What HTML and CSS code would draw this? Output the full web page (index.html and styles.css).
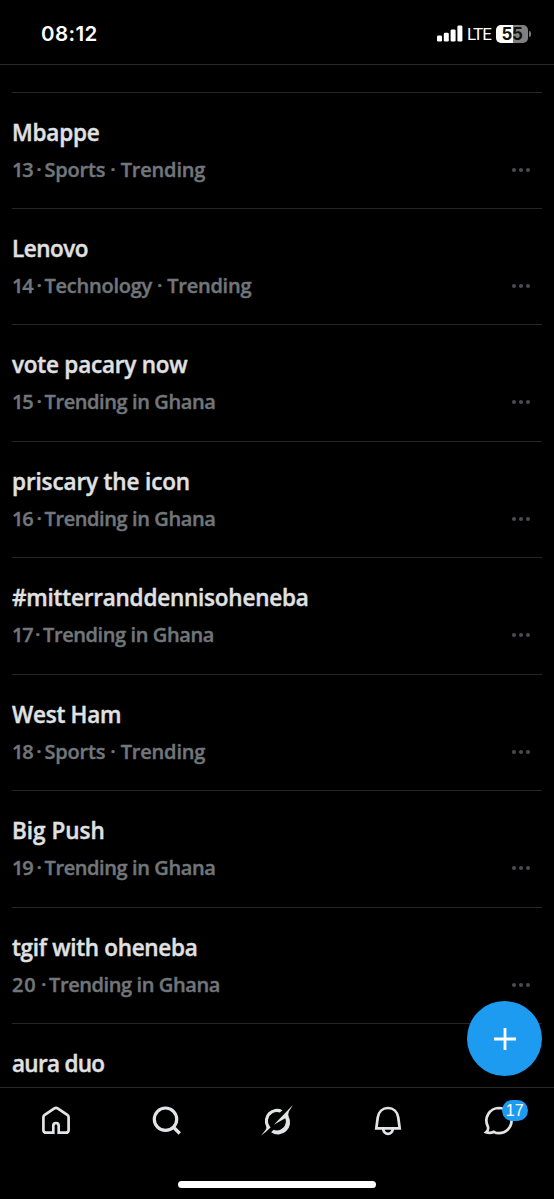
FILE: index.html
```html
<!DOCTYPE html>
<html lang="en">
<head>
<meta charset="utf-8">
<title>Trending</title>
<link rel="stylesheet" href="styles.css">
</head>
<body>
<div class="screen">
  <header class="status">
    <span class="time">08:12</span>
    <div class="indicators">
      <svg class="signal" width="26" height="17" viewBox="0 0 26 17" fill="#fff"><rect x="0" y="10.5" width="5" height="6" rx="1.3"/><rect x="6.8" y="7.7" width="5" height="8.8" rx="1.3"/><rect x="13.6" y="4.4" width="5" height="12.1" rx="1.3"/><rect x="20.4" y="0.5" width="5" height="16" rx="1.3"/></svg>
      <span class="network">LTE</span>
      <span class="battery">55</span>
      <span class="battery-tip"></span>
    </div>
  </header>
  <main class="trends">
    <article class="trend"><div><h2 class="t1">Mbappe</h2><p class="sports"><span class="rank">13</span><i>·</i>Sports · Trending</p></div><svg class="more" width="20" height="6" viewBox="0 0 20 6"><circle cx="3" cy="3" r="2"/><circle cx="10" cy="3" r="2"/><circle cx="17" cy="3" r="2"/></svg></article>
    <article class="trend"><div><h2 class="t2">Lenovo</h2><p class="tech"><span class="rank">14</span><i>·</i>Technology · Trending</p></div><svg class="more" width="20" height="6" viewBox="0 0 20 6"><circle cx="3" cy="3" r="2"/><circle cx="10" cy="3" r="2"/><circle cx="17" cy="3" r="2"/></svg></article>
    <article class="trend"><div><h2 class="t3">vote pacary now</h2><p class="place"><span class="rank">15</span><i>·</i>Trending in Ghana</p></div><svg class="more" width="20" height="6" viewBox="0 0 20 6"><circle cx="3" cy="3" r="2"/><circle cx="10" cy="3" r="2"/><circle cx="17" cy="3" r="2"/></svg></article>
    <article class="trend"><div><h2 class="t4">priscary the icon</h2><p class="place"><span class="rank">16</span><i>·</i>Trending in Ghana</p></div><svg class="more" width="20" height="6" viewBox="0 0 20 6"><circle cx="3" cy="3" r="2"/><circle cx="10" cy="3" r="2"/><circle cx="17" cy="3" r="2"/></svg></article>
    <article class="trend"><div><h2 class="t5">#mitterranddennisoheneba</h2><p class="place"><span class="rank narrow">17</span><i>·</i>Trending in Ghana</p></div><svg class="more" width="20" height="6" viewBox="0 0 20 6"><circle cx="3" cy="3" r="2"/><circle cx="10" cy="3" r="2"/><circle cx="17" cy="3" r="2"/></svg></article>
    <article class="trend"><div><h2 class="t6">West Ham</h2><p class="sports"><span class="rank">18</span><i>·</i>Sports · Trending</p></div><svg class="more" width="20" height="6" viewBox="0 0 20 6"><circle cx="3" cy="3" r="2"/><circle cx="10" cy="3" r="2"/><circle cx="17" cy="3" r="2"/></svg></article>
    <article class="trend"><div><h2 class="t7">Big Push</h2><p class="place"><span class="rank">19</span><i>·</i>Trending in Ghana</p></div><svg class="more" width="20" height="6" viewBox="0 0 20 6"><circle cx="3" cy="3" r="2"/><circle cx="10" cy="3" r="2"/><circle cx="17" cy="3" r="2"/></svg></article>
    <article class="trend"><div><h2 class="t8">tgif with oheneba</h2><p class="place"><span class="rank wide">20</span><i>·</i>Trending in Ghana</p></div><svg class="more" width="20" height="6" viewBox="0 0 20 6"><circle cx="3" cy="3" r="2"/><circle cx="10" cy="3" r="2"/><circle cx="17" cy="3" r="2"/></svg></article>
    <article class="trend last"><div><h2 class="t9">aura duo</h2></div></article>
  </main>
  <button class="compose" aria-label="Compose"><svg width="24" height="24" viewBox="0 0 24 24" stroke="#fff" stroke-width="2.8"><path d="M12 1v22M1 12h22"/></svg></button>
  <nav class="tabs">
    <a><svg width="32" height="32" viewBox="0 0 32 32"><path d="M13.3 27.7H6.2Q3.4 27.7 3.4 24.9V12.3Q3.4 10.8 4.7 9.9L14 3.6Q16 2.2 18 3.6L27.3 9.9Q28.6 10.8 28.6 12.3V24.9Q28.6 27.7 25.8 27.7H18.7V21Q18.7 18 16 18T13.3 21Z"/></svg></a>
    <a><svg width="32" height="32" viewBox="0 0 32 32"><circle cx="14.5" cy="14.2" r="11.2" stroke-width="3.2"/><path d="M22.3 22L28.8 28.5" stroke-width="3.3"/></svg></a>
    <a><svg class="solid" width="34" height="34" viewBox="0 0 34 34"><path d="M22.5 5.2A12.1 12.1 0 0 0 6.1 21.3Q6.9 23.2 5.5 25L1 30.6Q5.5 27.4 10.6 22.4Q7.5 18.6 8.1 14.4A9.1 9.1 0 0 1 19.8 7.5Z"/><path d="M13.8 19.8L25.2 8Q29 4 33 .1L29 6.2Q27.8 8.7 28.6 11.5A12.1 12.1 0 0 1 11.1 27.3L13.6 24.8A9.1 9.1 0 0 0 25.3 13.2Z"/></svg></a>
    <a><svg width="32" height="32" viewBox="0 0 32 32"><path d="M4.3 23.4H27.7L26.3 12.7C25.5 6.8 21.4 3 16 3S6.5 6.8 5.7 12.7ZM11 23.8Q12 28.8 16 28.8T21 23.8"/></svg></a>
    <a class="messages"><svg width="32" height="32" viewBox="0 0 32 32"><path d="M16 3A12.6 12.6 0 0 1 16 28.2Q13 28.2 10.8 26.8Q7 28.8 3.1 27.3Q6 24.8 4.8 21.3A12.6 12.6 0 0 1 16 3Z"/></svg><span class="badge">17</span></a>
  </nav>
  <footer class="home"><span></span></footer>
</div>
</body>
</html>
```
FILE: styles.css
```css
* { box-sizing: border-box; }
body { margin: 0; background: #000; }
.screen { position: relative; width: 554px; height: 1199px; display: flex; flex-direction: column; overflow: hidden; background: #000; color: #e0e1e2; font-family: "Open Sans", "Noto Sans", sans-serif; }
.status { height: 65px; flex: none; display: flex; justify-content: space-between; align-items: flex-start; padding: 21px 23px 0 41px; border-bottom: 1px solid #28292b; color: #fff; font-family: Inter, sans-serif; }
.time { font-size: 20.5px; font-weight: 600; line-height: 26px; letter-spacing: 0.4px; }
.indicators { display: flex; align-items: center; height: 26px; }
.signal { margin-top: -2px; }
.network { margin-left: 4px; width: 25px; font-family: Roboto, sans-serif; font-size: 17.5px; line-height: 26px; letter-spacing: -1.2px; }
.network { font-size: 17px; letter-spacing: -0.9px; }
.battery { width: 32px; height: 18px; margin: -1px 0 0 4px; border-radius: 5px; background: linear-gradient(90deg, #fff 54%, #808080 54%); color: #111; font-size: 17px; font-weight: 700; line-height: 18px; text-align: center; letter-spacing: -0.4px; }
.battery-tip { width: 2px; height: 6px; margin-left: 1px; border-radius: 0 2px 2px 0; background: #777; }
.trends { flex: none; height: 1022px; padding: 26.5px 12px 0; overflow: hidden; }
.trend { height: 116.45px; border-top: 1px solid #252628; padding-top: 23px; display: flex; justify-content: space-between; align-items: flex-start; }
h2, p { margin: 0; white-space: nowrap; -webkit-text-stroke: 0.4px currentColor; }
h2 { font-size: 22.5px; font-weight: 600; line-height: 34px; }
p { margin-top: 5px; font-size: 20px; font-weight: 600; line-height: 30px; color: #71767b; display: flex; }
.t1 { letter-spacing: -0.2px; }
.t2 { letter-spacing: -0.5px; }
.t3 { letter-spacing: -0.22px; }
.t4 { letter-spacing: -0.13px; }
.t5 { letter-spacing: -0.22px; }
.t6 { letter-spacing: -0.27px; }
.t8 { letter-spacing: -0.3px; }
.t9 { letter-spacing: -0.7px; }
.sports { letter-spacing: -0.18px; }
.tech { letter-spacing: -0.24px; }
.place { letter-spacing: -0.4px; }
.rank { width: 21.5px; letter-spacing: -1.3px; }
.rank.narrow { width: 20px; }
.rank.wide { width: 26px; letter-spacing: 0.9px; }
i { width: 11px; text-align: center; font-style: normal; }
.more { margin: 51px 11px 0 0; fill: #4a4d50; }
.compose { position: absolute; left: 467px; top: 1001px; width: 75px; height: 75px; border: 0; border-radius: 50%; background: #1d9bf0; display: grid; place-items: center; padding: 0; }
.tabs { height: 69px; flex: none; display: grid; grid-template-columns: repeat(5, 1fr); justify-items: center; padding: 17px 0 0 1px; border-top: 1px solid #28292b; }
.tabs a { position: relative; width: 32px; height: 34px; display: flex; justify-content: center; }
.tabs svg { flex: none; fill: none; stroke: #e3e4e5; stroke-width: 2.7; }
.tabs .solid { fill: #e3e4e5; stroke: none; }
.badge { position: absolute; left: 19px; top: -5px; width: 26px; height: 21px; border-radius: 11px; background: #1d9bf0; color: #fff; font: 400 16px/21px "Liberation Sans", sans-serif; text-align: center; }
.home { flex: 1; display: flex; justify-content: center; padding-top: 25px; }
.home span { width: 198px; height: 7px; border-radius: 3.5px; background: #fff; }
```
